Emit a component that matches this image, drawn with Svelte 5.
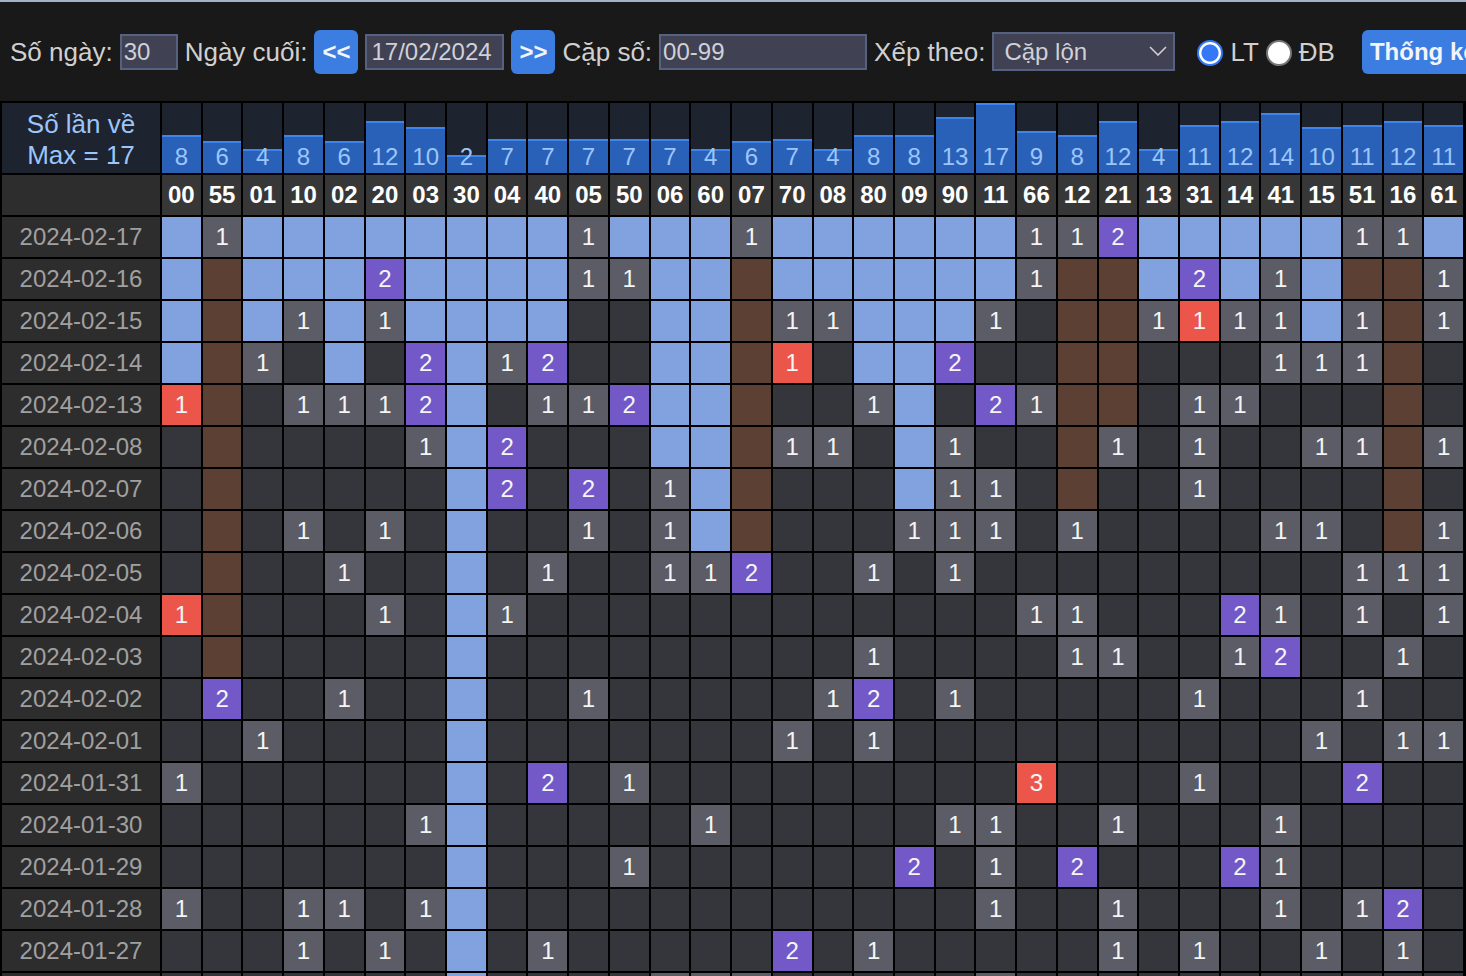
<script lang="ts">
  type Draw = {
    date: string;
    hits: string;
  };

  type Cell = {
    count: number;
    kind: string;
  };

  const MAX = 17;

  const pairs =
    '00 55 01 10 02 20 03 30 04 40 05 50 06 60 07 70 08 80 09 90 11 66 12 21 13 31 14 41 15 51 16 61'.split(' ');
  const totals = [
    8, 6, 4, 8, 6, 12, 10, 2, 7, 7, 7, 7, 7, 4, 6, 7, 4, 8, 8, 13, 17, 9, 8, 12, 4, 11, 12, 14, 10, 11, 12, 11
  ];

  // "21x2" = pair 21 came twice, "*" = it also hit the special prize
  const draws: Draw[] = [
    { date: '2024-02-17', hits: '55 05 07 66 12 21x2 51 16' },
    { date: '2024-02-16', hits: '20x2 05 50 66 31x2 41 61' },
    { date: '2024-02-15', hits: '10 20 70 08 11 13 31* 14 41 51 61' },
    { date: '2024-02-14', hits: '01 03x2 04 40x2 70* 90x2 41 15 51' },
    { date: '2024-02-13', hits: '00* 10 02 20 03x2 40 05 50x2 80 11x2 66 31 14' },
    { date: '2024-02-08', hits: '03 04x2 70 08 90 21 31 15 51 61' },
    { date: '2024-02-07', hits: '04x2 05x2 06 90 11 31' },
    { date: '2024-02-06', hits: '10 20 05 06 09 90 11 12 41 15 61' },
    { date: '2024-02-05', hits: '02 40 06 60 07x2 80 90 51 16 61' },
    { date: '2024-02-04', hits: '00* 20 04 66 12 14x2 41 51 61' },
    { date: '2024-02-03', hits: '80 12 21 14 41x2 16' },
    { date: '2024-02-02', hits: '55x2 02 05 08 80x2 90 31 51' },
    { date: '2024-02-01', hits: '01 70 80 15 16 61' },
    { date: '2024-01-31', hits: '00 40x2 50 66x3* 31 51x2' },
    { date: '2024-01-30', hits: '03 60 90 11 21 41' },
    { date: '2024-01-29', hits: '50 09x2 11 12x2 14x2 41' },
    { date: '2024-01-28', hits: '00 10 02 03 11 21 41 51 16x2' },
    { date: '2024-01-27', hits: '10 20 40 70x2 80 21 31 15 16' },
    { date: '2024-01-26', hits: '06 60 07 11' }
  ];

  let days = $state('30');
  let lastDay = $state('17/02/2024');
  let range = $state('00-99');
  let sort = $state('lon');
  let mode = $state('lt');

  function barHeight(n: number) {
    return 2 * Math.round(5 + n * 1.75);
  }

  function buildRows(list: Draw[]) {
    const seen: Record<string, number> = {};
    const first: Record<string, number> = {};

    return list.map((draw, row) => {
      const hits: Record<string, Cell> = {};
      for (const token of draw.hits.split(' ').filter(Boolean)) {
        const count = Number(token.match(/x(\d)/)?.[1] ?? 1);
        const kind = token.endsWith('*') ? 'special' : count > 1 ? 'double' : 'single';
        hits[token.slice(0, 2)] = { count, kind };
      }

      const cells = pairs.map((pair): Cell => {
        if (hits[pair]) {
          seen[pair] = (seen[pair] ?? 0) + 1;
          first[pair] ??= row;
          return hits[pair];
        }
        // chưa về lần nào tính từ ngày cuối
        if (!seen[pair]) return { count: 0, kind: 'waiting' };
        // khoảng gan ngay trước lần về mới nhất
        if (seen[pair] === 1 && first[pair] === 0) return { count: 0, kind: 'gap' };
        return { count: 0, kind: '' };
      });

      return { date: draw.date, cells };
    });
  }

  const rows = buildRows(draws);
</script>

<main class="page">
  <form class="toolbar" onsubmit={(e) => e.preventDefault()}>
    <label for="days">Số ngày:</label>
    <input id="days" class="field days" type="text" bind:value={days} />
    <label for="last-day">Ngày cuối:</label>
    <button type="button" class="btn step">&lt;&lt;</button>
    <input id="last-day" class="field date" type="text" bind:value={lastDay} />
    <button type="button" class="btn step">&gt;&gt;</button>
    <label for="range">Cặp số:</label>
    <input id="range" class="field range" type="text" bind:value={range} />
    <label for="sort">Xếp theo:</label>
    <div class="select-wrap">
      <select id="sort" class="select" bind:value={sort}>
        <option value="lon">Cặp lộn</option>
        <option value="tang">Tăng dần</option>
      </select>
      <svg class="chevron" viewBox="0 0 18 10" aria-hidden="true">
        <path d="M1 1l8 8 8-8" fill="none" stroke="currentColor" stroke-width="1.6" />
      </svg>
    </div>
    <div class="modes">
      <input id="mode-lt" type="radio" name="mode" value="lt" bind:group={mode} />
      <label for="mode-lt">LT</label>
      <input id="mode-db" type="radio" name="mode" value="db" bind:group={mode} />
      <label for="mode-db">ĐB</label>
    </div>
    <button type="submit" class="btn submit">Thống kê</button>
  </form>

  <table class="stats">
    <thead>
      <tr class="totals">
        <th class="caption" scope="row">Số lần về<br />Max = {MAX}</th>
        {#each totals as total, i (i)}
          <td class="total">
            <div class="bar" style={`height:${barHeight(total)}px`}></div>
            <span>{total}</span>
          </td>
        {/each}
      </tr>
      <tr>
        <td class="day"></td>
        {#each pairs as pair (pair)}
          <th class="pair" scope="col">{pair}</th>
        {/each}
      </tr>
    </thead>
    <tbody>
      {#each rows as row (row.date)}
        <tr>
          <th class="day" scope="row">{row.date}</th>
          {#each row.cells as cell, i (i)}
            <td class={`cell ${cell.kind}`}>{cell.count || ''}</td>
          {/each}
        </tr>
      {/each}
    </tbody>
  </table>
</main>

<style>
  :global(body) {
    margin: 0;
    background: #191919;
  }

  .page {
    box-sizing: border-box;
    height: 100vh;
    overflow: hidden;
    border-top: 2px solid #a3b1c9;
    background: #191919;
    color: #d0d0d0;
    font-family: 'Liberation Sans', Arial, sans-serif;
    font-size: 24px;
  }

  .toolbar {
    display: flex;
    align-items: center;
    height: 99px;
    padding-left: 10px;
    white-space: nowrap;
  }

  .toolbar > * {
    flex-shrink: 0;
  }

  .toolbar label {
    margin-right: 7px;
    font-size: 26px;
    line-height: 30px;
  }

  .field,
  .select {
    box-sizing: border-box;
    margin: 0 7px 0 0;
    border: 2px solid #566080;
    border-radius: 0;
    background: #404152;
    color: #d0d0d8;
    font-family: inherit;
    font-size: 24px;
    outline: none;
  }

  .field {
    height: 36px;
    padding: 0 2px;
  }

  .days {
    width: 58px;
  }

  .date {
    width: 139px;
    padding-left: 4px;
  }

  .range {
    width: 208px;
  }

  .select-wrap {
    position: relative;
    margin-right: 22px;
  }

  .select {
    display: block;
    width: 183px;
    height: 39px;
    margin: 0;
    padding: 0 32px 0 10px;
    appearance: none;
  }

  .chevron {
    position: absolute;
    top: 14px;
    right: 8px;
    width: 18px;
    height: 10px;
    color: #d0d0d8;
    pointer-events: none;
  }

  .btn {
    height: 44px;
    margin: 0 7px 0 0;
    padding: 0 8px;
    border: 0;
    border-radius: 6px;
    background: #3b7de0;
    color: #f2f4fa;
    font-family: inherit;
    font-size: 24px;
    font-weight: 700;
  }

  .step {
    width: 44px;
  }

  .modes {
    display: flex;
    align-items: center;
    margin-right: 20px;
  }

  .modes input {
    box-sizing: border-box;
    width: 26px;
    height: 26px;
    margin: 2px 7px 0 0;
    border: 2px solid #767676;
    border-radius: 50%;
    background: #fff;
    appearance: none;
  }

  .modes input:checked {
    border-color: #3478f6;
    background: radial-gradient(circle, #3478f6 8px, #fff 9px);
  }

  .stats {
    display: flex;
    flex-direction: column;
    gap: 2px;
    padding: 2px 3px 2px 2px;
    background: #000;
  }

  thead,
  tbody {
    display: grid;
    gap: 2px;
  }

  tr {
    display: grid;
    grid-template-columns: 158px repeat(32, minmax(0, 1fr));
    grid-auto-rows: 40px;
    gap: 2px;
  }

  .totals {
    grid-auto-rows: 70px;
  }

  th,
  td {
    padding: 0;
    line-height: 40px;
    text-align: center;
  }

  .caption {
    padding-top: 6px;
    background: #1e2330;
    color: #9cc5fb;
    font-size: 26px;
    font-weight: 400;
    line-height: 31px;
  }

  .total {
    position: relative;
    display: flex;
    align-items: flex-end;
    justify-content: center;
    background: #1e2330;
    color: #9cc5fb;
    line-height: 32px;
  }

  .bar {
    position: absolute;
    right: 0;
    bottom: 0;
    left: 0;
    box-sizing: border-box;
    border-top: 2px solid #3d85ee;
    background: #2961b8;
  }

  .total span {
    position: relative;
  }

  .pair {
    background: #373737;
    color: #fff;
    font-weight: 700;
  }

  .day {
    background: #2d2d2d;
    color: #a0a0a0;
    font-weight: 400;
  }

  .cell {
    background: #35363b;
    color: #f5f5f5;
  }

  .single {
    background: #5c5c66;
  }

  .double {
    background: #7359c8;
  }

  .special {
    background: #ec5549;
  }

  .waiting {
    background: #81a2df;
  }

  .gap {
    background: #5c4033;
  }
</style>
